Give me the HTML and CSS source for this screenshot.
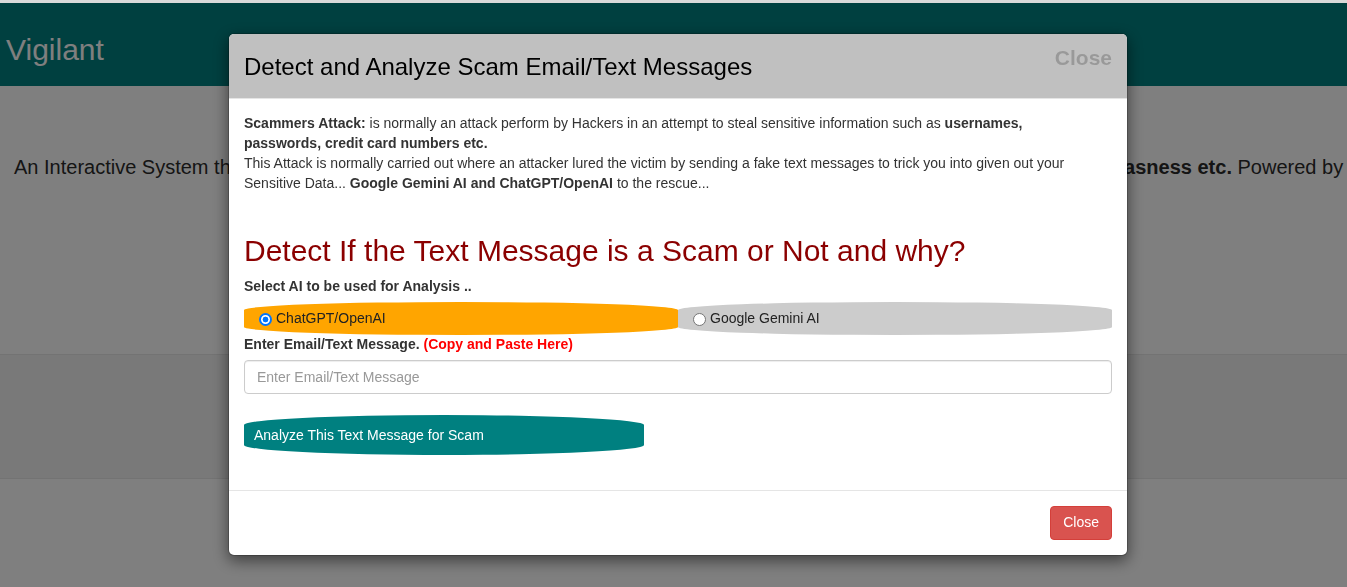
FILE: index.html
```html
<!DOCTYPE html>
<html lang="en">
<head>
<meta charset="utf-8">
<title>Vigilant</title>
<link rel="stylesheet" href="styles.css">
</head>
<body>
<div class="topstrip"></div>
<nav class="navbar">
  <span class="brand">Vigilant</span>
</nav>
<section class="intro">
  <p class="intro-text">An Interactive System that helps to detect and analyze scam email/text messages, looking for: <b>Phishing, Fraud, Urgency, Biasness etc.</b> Powered by Google Gemini AI and ChatGPT/OpenAI</p>
</section>
<section class="band"></section>
<section class="rest"></section>

<div class="backdrop"></div>

<div class="modal">
  <div class="modal-header">
    <span class="close-x">Close</span>
    <h4 class="modal-title">Detect and Analyze Scam Email/Text Messages</h4>
  </div>
  <div class="modal-body">
    <p class="lead-text"><b>Scammers Attack:</b> is normally an attack perform by Hackers in an attempt to steal sensitive information such as <b>usernames, passwords, credit card numbers etc.</b><br>This Attack is normally carried out where an attacker lured the victim by sending a fake text messages to trick you into given out your Sensitive Data... <b>Google Gemini AI and ChatGPT/OpenAI</b> to the rescue...</p>
    <h2 class="detect-title">Detect If the Text Message is a Scam or Not and why?</h2>
    <label class="field-label">Select AI to be used for Analysis ..</label>
    <div class="ai-choice">
      <label class="ai-option ai-openai"><input class="radio" type="radio" name="ai" checked> ChatGPT/OpenAI</label>
      <label class="ai-option ai-gemini"><input class="radio" type="radio" name="ai"> Google Gemini AI</label>
    </div>
    <label class="field-label">Enter Email/Text Message. <span class="hint">(Copy and Paste Here)</span></label>
    <input class="form-control" type="text" placeholder="Enter Email/Text Message">
    <button class="analyze-btn" type="button">Analyze This Text Message for Scam</button>
  </div>
  <div class="modal-footer">
    <button class="btn-danger" type="button">Close</button>
  </div>
</div>
</body>
</html>
```

FILE: styles.css
```css
* { box-sizing: border-box; }

html, body {
  margin: 0;
  padding: 0;
  height: 100%;
  overflow: hidden;
}

body {
  font-family: "Liberation Sans", Arial, Helvetica, sans-serif;
  font-size: 14px;
  line-height: 1.42857;
  color: #333;
  background: #fff;
}

.topstrip {
  height: 3px;
  background: #d9d9d9;
}

.navbar {
  height: 83px;
  background: #008080;
  padding: 30px 0 0 6px;
}

.brand {
  display: block;
  font-size: 30px;
  line-height: 34px;
  color: #fff;
}

.intro {
  height: 268px;
  padding-top: 67px;
}

.intro-text {
  margin: 0;
  padding-left: 14px;
  font-size: 20px;
  line-height: 28px;
  white-space: nowrap;
  overflow: hidden;
  color: #2b2b2b;
}

.band {
  height: 125px;
  background: #f2f2f2;
  border-top: 1px solid #e6e6e6;
  border-bottom: 1px solid #e6e6e6;
}

.rest {
  height: 200px;
}

.backdrop {
  position: fixed;
  top: 3px;
  left: 0;
  right: 0;
  bottom: 0;
  background: rgba(0, 0, 0, 0.5);
}

.modal {
  position: fixed;
  top: 33px;
  left: 228px;
  width: 900px;
  background: #fff;
  border: 1px solid rgba(0, 0, 0, 0.2);
  border-radius: 6px;
  box-shadow: 0 5px 15px rgba(0, 0, 0, 0.5);
  background-clip: padding-box;
  overflow: hidden;
}

.modal-header {
  background: #c0c0c0;
  padding: 16px 15px 14px 15px;
  border-bottom: 1px solid #e5e5e5;
}

.modal-title {
  margin: 0;
  font-size: 24px;
  font-weight: normal;
  line-height: 34px;
  color: #000;
}

.close-x {
  float: right;
  margin-top: -3px;
  font-size: 21px;
  font-weight: bold;
  line-height: 1;
  color: #000;
  opacity: 0.2;
}

.modal-body {
  padding: 15px 15px 35px 15px;
}

.lead-text {
  margin: 0 0 10px 0;
  padding-right: 14px;
}

.detect-title {
  margin: 40px 0 10px 0;
  font-size: 30px;
  font-weight: normal;
  line-height: 1.1;
  color: #8b0000;
}

.field-label {
  display: block;
  margin-bottom: 5px;
  font-weight: bold;
}

.hint {
  color: #f00;
}

.ai-choice {
  display: flex;
}

.ai-option {
  flex: 1 1 0;
  height: 33px;
  display: flex;
  align-items: center;
  gap: 4px;
  padding: 2px 0 0 15px;
  color: #222;
  border-radius: 50% / 8px;
}

.radio {
  appearance: none;
  -webkit-appearance: none;
  margin: 0;
  width: 13px;
  height: 13px;
  border-radius: 50%;
  border: 1px solid #767676;
  background: #fff;
  flex: none;
}

.radio:checked {
  border: 2px solid #0075ff;
  background: radial-gradient(circle, #0075ff 0 2.6px, #fff 3.2px);
}

.ai-openai {
  background: #ffa500;
}

.ai-gemini {
  background: #ccc;
}

.form-control {
  display: block;
  width: 100%;
  height: 34px;
  padding: 6px 12px;
  font-family: inherit;
  font-size: 14px;
  color: #555;
  background: #fff;
  border: 1px solid #ccc;
  border-radius: 4px;
  box-shadow: inset 0 1px 1px rgba(0, 0, 0, 0.075);
}

.form-control::placeholder {
  color: #999;
}

.analyze-btn {
  display: block;
  margin-top: 21px;
  width: 400px;
  height: 40px;
  padding: 0 10px;
  text-align: left;
  font-family: inherit;
  font-size: 14px;
  color: #fff;
  background: #008080;
  border: none;
  border-radius: 50% / 10px;
}

.modal-footer {
  padding: 15px;
  border-top: 1px solid #e5e5e5;
  display: flex;
  justify-content: flex-end;
}

.btn-danger {
  height: 34px;
  padding: 6px 12px;
  font-family: inherit;
  font-size: 14px;
  line-height: 1.42857;
  color: #fff;
  background: #d9534f;
  border: 1px solid #d43f3a;
  border-radius: 4px;
}
```
